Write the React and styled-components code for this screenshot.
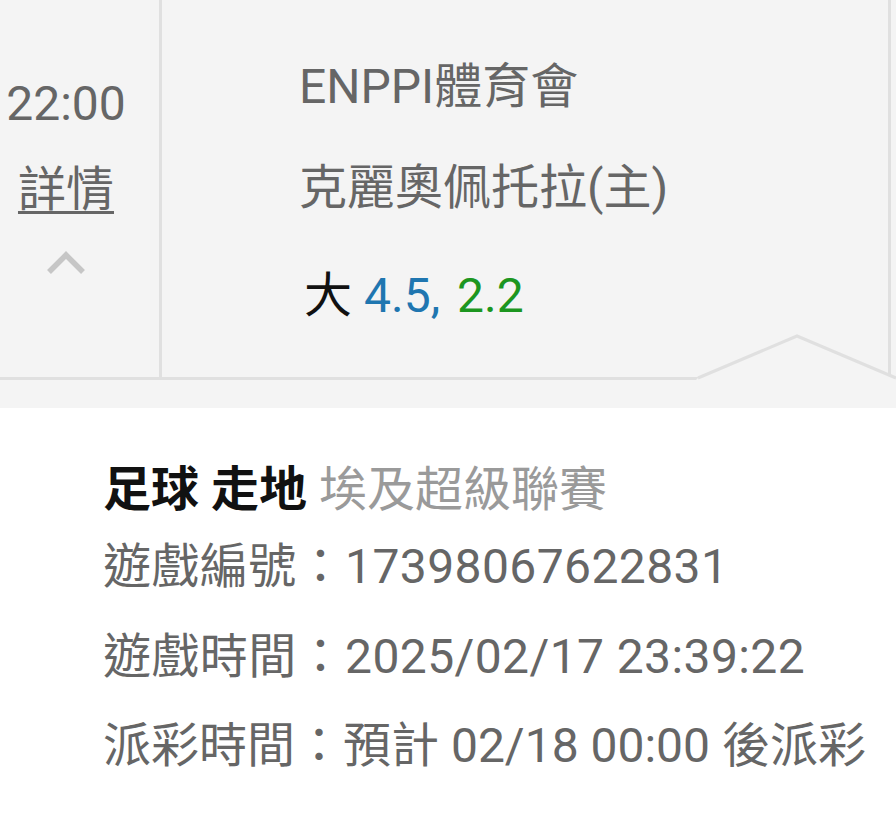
import React from "react";
import styled, { createGlobalStyle } from "styled-components";

const GlobalStyle = createGlobalStyle`
  html, body {
    margin: 0;
    padding: 0;
    background: #f4f4f4;
  }
  body {
    font-family: "Roboto", "Noto Sans CJK TC", sans-serif;
  }
`;

const Page = styled.div`
  width: 896px;
  height: 837px;
  display: flex;
  flex-direction: column;
  background: #f4f4f4;
  overflow: hidden;
  font-size: 48px;
  color: #666;
`;

const MatchRow = styled.div`
  position: relative;
  display: flex;
  height: 380px;
  box-sizing: border-box;
  border-bottom: 3px solid #e0e0e0;
  background: #f4f4f4;
`;

const TimeCell = styled.div`
  box-sizing: border-box;
  width: 162px;
  padding: 74px 27px 0 0;
  border-right: 3px solid #e0e0e0;
  display: flex;
  flex-direction: column;
  align-items: center;
`;

const TimeText = styled.div`
  line-height: 60px;
  color: #666;
  white-space: nowrap;
`;

const DetailLink = styled.a`
  display: block;
  margin-top: 26px;
  line-height: 60px;
  color: #666;
  text-decoration: underline;
  text-decoration-thickness: 3px;
  text-underline-offset: 5px;
  cursor: pointer;
`;

const Chevron = styled.svg`
  display: block;
  margin-top: 28px;
`;

const MatchCell = styled.div`
  box-sizing: border-box;
  width: 729px;
  padding: 57px 0 0 137px;
  border-right: 3px solid #e0e0e0;
  display: flex;
  flex-direction: column;
`;

const TeamName = styled.div`
  line-height: 60px;
  color: #666;
  white-space: nowrap;
  margin-top: ${(p) => p.$gap || 0}px;
`;

const OddsLine = styled.div`
  line-height: 60px;
  margin-top: 48px;
  padding-left: 5px;
  white-space: nowrap;
  color: #111;
`;

const OddsValue = styled.span`
  color: ${(p) => p.$color};
  margin-left: ${(p) => p.$gap}px;
`;

const ExtraCell = styled.div`
  flex: 1;
`;

const Pointer = styled.svg`
  position: absolute;
  right: 0;
  bottom: -3px;
  display: block;
`;

const DetailPanel = styled.div`
  flex: 1;
  margin-top: 28px;
  background: #ffffff;
  padding: 52px 0 0 103px;
  display: flex;
  flex-direction: column;
`;

const Heading = styled.div`
  line-height: 60px;
  white-space: nowrap;
`;

const Sport = styled.span`
  font-weight: 700;
  color: #111;
`;

const League = styled.span`
  color: #9a9a9a;
  margin-left: 12px;
`;

const InfoRow = styled.div`
  line-height: 60px;
  color: #666;
  white-space: nowrap;
  margin-top: ${(p) => p.$gap}px;
  letter-spacing: ${(p) => p.$spacing || 0}px;
`;

export default function App() {
  return (
    <>
      <GlobalStyle />
      <Page>
        <MatchRow>
          <TimeCell>
            <TimeText>22:00</TimeText>
            <DetailLink>詳情</DetailLink>
            <Chevron width="42" height="27" viewBox="0 0 42 27">
              <polyline
                points="4,24 21,7 38,24"
                fill="none"
                stroke="#c6c6c6"
                strokeWidth="5.5"
              />
            </Chevron>
          </TimeCell>
          <MatchCell>
            <TeamName>ENPPI體育會</TeamName>
            <TeamName $gap={41}>克麗奧佩托拉(主)</TeamName>
            <OddsLine>
              大
              <OddsValue $color="#1f76b0" $gap={12}>4.5,</OddsValue>
              <OddsValue $color="#1c961f" $gap={17}>2.2</OddsValue>
            </OddsLine>
          </MatchCell>
          <ExtraCell />
          <Pointer width="200" height="48" viewBox="0 0 200 48">
            <polygon points="0,48 2,46 101,4 200,46 200,48" fill="#f4f4f4" />
            <polyline
              points="2,46 101,4 200,46"
              fill="none"
              stroke="#e0e0e0"
              strokeWidth="3"
            />
          </Pointer>
        </MatchRow>
        <DetailPanel>
          <Heading>
            <Sport>足球 走地</Sport>
            <League>埃及超級聯賽</League>
          </Heading>
          <InfoRow $gap={17} $spacing={0.4}>遊戲編號：17398067622831</InfoRow>
          <InfoRow $gap={30} $spacing={0.4}>遊戲時間：2025/02/17 23:39:22</InfoRow>
          <InfoRow $gap={29}>派彩時間：預計 02/18 00:00 後派彩</InfoRow>
        </DetailPanel>
      </Page>
    </>
  );
}
